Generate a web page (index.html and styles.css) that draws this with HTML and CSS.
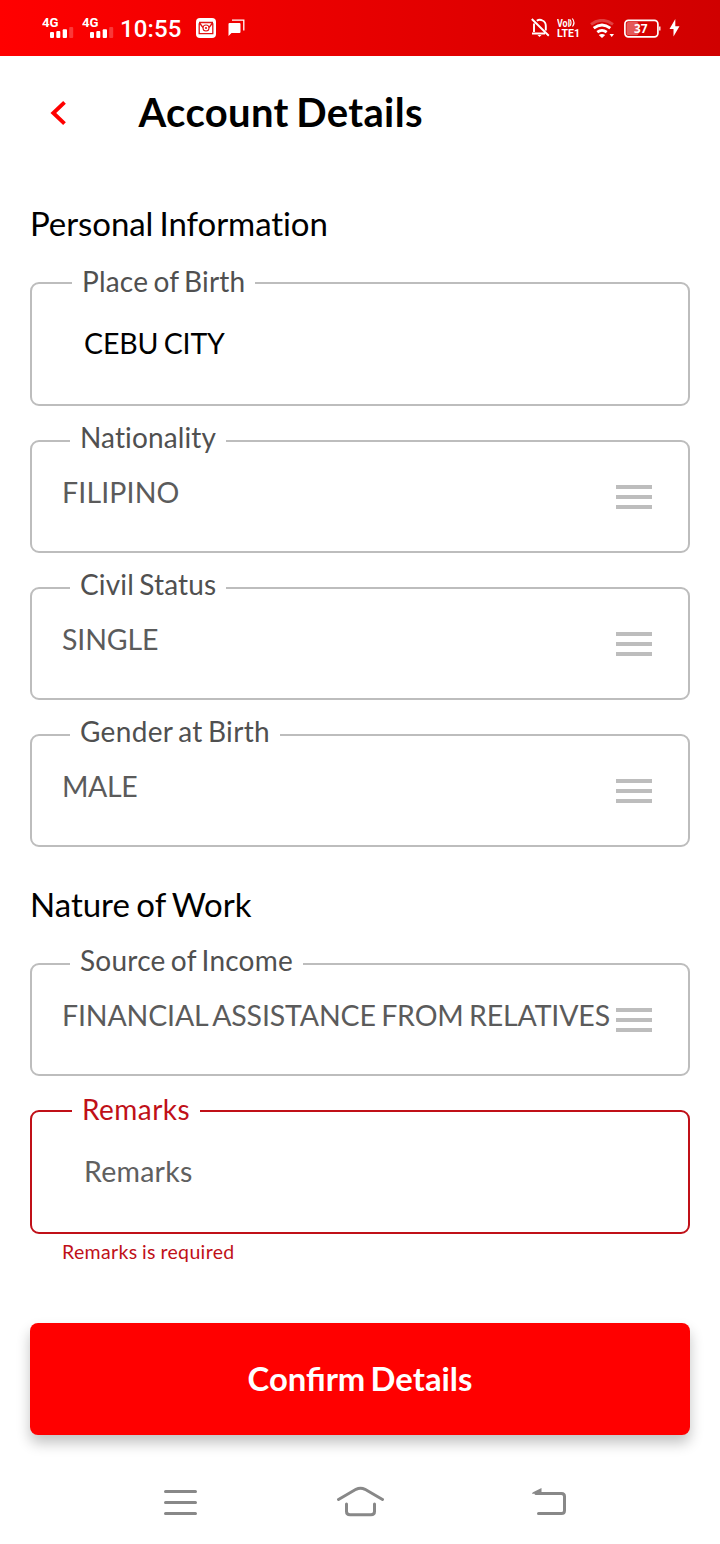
FILE: index.html
```html
<!DOCTYPE html>
<html lang="en">
<head>
<meta charset="utf-8">
<title>Account Details</title>
<link rel="stylesheet" href="styles.css">
</head>
<body>
<div class="status">
  <svg class="signal" width="32" height="24" viewBox="0 0 32 24"><text class="gen" x="0" y="11" textLength="16.5" lengthAdjust="spacingAndGlyphs">4G</text><g fill="#fff"><rect x="8" y="16" width="4" height="6" rx="1"/><rect x="14.3" y="15" width="4" height="7" rx="1"/><rect x="20.7" y="13.3" width="4.3" height="8.7" rx="1"/><rect x="27.2" y="11" width="4" height="11" rx="1" opacity=".22"/></g></svg>
  <svg class="signal" width="32" height="24" viewBox="0 0 32 24"><text class="gen" x="0" y="11" textLength="16.5" lengthAdjust="spacingAndGlyphs">4G</text><g fill="#fff"><rect x="8" y="16" width="4" height="6" rx="1"/><rect x="14.3" y="15" width="4" height="7" rx="1"/><rect x="20.7" y="13.3" width="4.3" height="8.7" rx="1"/><rect x="27.2" y="11" width="4" height="11" rx="1" opacity=".22"/></g></svg>
  <span class="time">10:55</span>
  <svg class="mail" width="20" height="20" viewBox="0 0 20 20"><rect width="20" height="20" rx="4" fill="#fff"/><path d="M3.2 5.2V15.6H16.8V5.2M3 4.5H17M3.5 5L7 9.5M16.500 5L13 9.500" fill="none" stroke="#e11414" stroke-width="1.3"/><circle cx="10" cy="10" r="3" fill="none" stroke="#e11414" stroke-width="1.1"/><circle cx="10" cy="10" r="1.1" fill="#e11414"/></svg>
  <svg class="chat" width="17" height="18" viewBox="0 0 17 18"><path d="M1.500 4H11.500Q12.500 4 12.500 5V13Q12.500 14 11.500 14H3.500L.5 17V5Q.5 4 1.500 4Z" fill="#fff"/><path d="M4 1.200H15.800V11.500" fill="none" stroke="#fff" stroke-width="1.300"/></svg>
  <span class="spacer"></span>
  <svg class="bell" width="19" height="20" viewBox="0 0 19 20"><g fill="none" stroke="#fff" stroke-width="1.900"><path d="M3 5.500V14M1 15.500H14M5.800 2.800Q8.500 .8 11.500 2.500Q14.800 4 14.800 8V12.500M.8 1L17.800 17.800"/></g><path d="M6.500 17H10.500L8.500 19Z" fill="#fff"/></svg>
  <svg class="lte" width="24" height="24" viewBox="0 0 24 24"><text class="volte" x="0" y="11" textLength="13" lengthAdjust="spacingAndGlyphs">Vol</text><path d="M13 3.500Q15 6.500 13 10M15.300 2.500Q18.500 6.500 15.500 10.500" fill="none" stroke="#fff" stroke-width="1.200"/><text class="volte" x="0" y="21" textLength="23" lengthAdjust="spacingAndGlyphs">LTE1</text></svg>
  <svg class="wifi" width="25" height="20" viewBox="0 0 25 20"><g fill="none" stroke="#fff" stroke-width="2.800"><path d="M1 5.300Q12 -2.700 23 5.300" opacity=".25"/><path d="M3.700 9.200Q12 2.700 20.300 9.200M7.300 13.200Q12 9.500 16.700 13.200"/></g><path d="M8.800 16Q12 14 15.200 16L12 19ZM19.500 15H24L21.750 18Z" fill="#fff"/></svg>
  <svg class="battery" width="37" height="20" viewBox="0 0 37 20"><rect x=".9" y="1.400" width="33" height="16.400" rx="3.500" fill="none" stroke="#fff" stroke-width="1.700"/><rect x="2.500" y="3" width="12" height="13.300" rx="2" fill="#fff" opacity=".35"/><path d="M35.800 7.500V11.500" stroke="#fff" stroke-width="1.300"/><text class="level" x="10" y="14" textLength="13.500" lengthAdjust="spacingAndGlyphs">37</text></svg>
  <svg class="bolt" width="11" height="18" viewBox="0 0 11 18"><path d="M6.300 0L.5 10H4.500V17.500L10.500 7.200H6.300Z" fill="#fff"/></svg>
</div>

<header class="header">
  <svg class="back" width="18" height="26" viewBox="0 0 18 26"><path d="M16.500 2.300L5.300 13L16.500 23.700" fill="none" stroke="#f00" stroke-width="3.900"/></svg>
  <h1 class="title">Account Details</h1>
</header>

<main class="form">
  <h2 class="section">Personal Information</h2>
  <div class="field text-field"><span class="label">Place of Birth</span><span class="value">CEBU CITY</span></div>
  <div class="field select nationality"><span class="label">Nationality</span><span class="value">FILIPINO</span><span class="menu"></span></div>
  <div class="field select"><span class="label">Civil Status</span><span class="value">SINGLE</span><span class="menu"></span></div>
  <div class="field select gender"><span class="label">Gender at Birth</span><span class="value">MALE</span><span class="menu"></span></div>
  <h2 class="section work">Nature of Work</h2>
  <div class="field select income"><span class="label">Source of Income</span><span class="value">FINANCIAL ASSISTANCE FROM RELATIVES</span><span class="menu"></span></div>
  <div class="field text-field error"><span class="label">Remarks</span><span class="value">Remarks</span></div>
  <p class="message">Remarks is required</p>
  <button class="confirm" type="button">Confirm Details</button>
</main>

<nav class="nav">
  <svg class="recent" width="33" height="28" viewBox="0 0 33 28"><path d="M1.500 3.500H31.500M1.500 14.500H31.500M1.500 25.500H31.500"/></svg>
  <svg class="home" width="48" height="32" viewBox="0 0 48 32"><path d="M2.500 13.500L20 3.300Q24.500 1 29 3.300L46.500 13.500M10.500 18V25.500Q10.500 28.700 14 28.700H35Q38.500 28.700 38.500 25.500V18"/></svg>
  <svg class="return" width="34" height="28" viewBox="0 0 34 28"><path d="M4 5.500H29.500Q32.500 5.500 32.500 8.500V22.500Q32.500 25.500 29.500 25.500H6.500"/><path class="tip" d="M0 5.700Q0 4.800 1 4.200L9.500 0V5.700Z"/></svg>
</nav>
</body>
</html>
```
FILE: styles.css
```css
* { box-sizing: border-box; }
body {
  margin: 0;
  width: 720px;
  height: 1544px;
  overflow: hidden;
  background: #fff;
  font-family: Lato, sans-serif;
  color: #000;
}
svg { display: block; flex: none; }
h1, h2, p { margin: 0; font-weight: 400; }

.status {
  display: flex;
  align-items: center;
  height: 56px;
  padding: 0 40px 0 42px;
  background: linear-gradient(90deg, #f00, #d00000);
  font-family: Roboto, sans-serif;
}
.signal { margin-right: 8px; }
.gen { font: 700 13px Roboto, sans-serif; fill: #fff; }
.time { width: 62px; margin-right: 14px; margin-left: -2px; padding-top: 1px; font-size: 24px; font-weight: 500; line-height: 56px; letter-spacing: .15px; color: #fff; white-space: nowrap; }
.chat { margin-left: 12px; margin-top: -1px; }
.spacer { flex: 1; }
.bell { margin-right: 7px; }
.lte { margin-right: 9px; }
.wifi { margin-right: 9px; margin-top: 1px; }
.battery { margin-right: 8px; margin-top: 2px; }
.volte { font: 700 10px Roboto, sans-serif; fill: #fff; }
.level { font: 700 12.5px "Open Sans", sans-serif; fill: #fff; }

.header { display: flex; align-items: center; height: 114px; padding-left: 48px; }
.title { margin: -2px 0 0 72.5px; font-size: 40px; font-weight: 700; line-height: 48px; letter-spacing: .36px; word-spacing: -2.7px; }

.form { display: flex; flex-direction: column; padding: 33px 30px 0; }
.section { height: 79px; font-size: 33px; line-height: 40px; letter-spacing: 0; word-spacing: -2px; font-variant-ligatures: none; }
.section:first-child { letter-spacing: -.08px; }
.section.work { height: 82px; padding-top: 3px; }
.field {
  position: relative;
  display: flex;
  justify-content: space-between;
  margin-bottom: 34px;
  border: 2px solid #bdbdbd;
  border-radius: 9px;
  color: #5b5b5b;
  font-size: 28.5px;
  line-height: 36px;
  white-space: nowrap;
}
.text-field { height: 124px; padding: 41px 52px 0; }
.select { height: 113px; padding: 32px 36px 0 30px; }
.label {
  position: absolute;
  left: 40px;
  top: -21px;
  padding: 0 10px;
  background: #fff;
  color: #505050;
  font-size: 28px;
  letter-spacing: .2px;
  word-spacing: -2.1px;
  font-variant-ligatures: none;
}
.select .label { left: 38px; top: -23px; letter-spacing: .16px; }
.value { letter-spacing: -.14px; word-spacing: -1.8px; }
.select.nationality .label { letter-spacing: .13px; }
.select.gender .label { letter-spacing: .33px; }
.select.income .label { letter-spacing: .24px; }
.nationality .value { letter-spacing: .15px; }
.gender .value { letter-spacing: -.4px; }
.text-field .value { color: #000; }
.menu { width: 36px; height: 24px; margin-top: 11px; flex: none; border: solid #bdbdbd; border-width: 4px 0; background: linear-gradient(#bdbdbd, #bdbdbd) center / 100% 4px no-repeat; }
.error { border-color: #c01018; margin-bottom: 0; }
.error .label { color: #c01018; letter-spacing: .45px; }
.error .value { color: #606060; letter-spacing: .25px; }
.message { height: 89px; padding: 6px 32px 0; font-size: 19.5px; line-height: 24px; color: #c01018; letter-spacing: .35px; word-spacing: -.8px; }
.confirm {
  height: 112px;
  padding: 0;
  border: 0;
  border-radius: 8px;
  background: #f00;
  color: #fff;
  font: 700 32.8px/40px Lato, sans-serif;
  word-spacing: -2.7px;
  box-shadow: 0 8px 14px rgba(0, 0, 0, .24);
}

.nav { display: flex; align-items: center; height: 64px; padding-left: 164px; margin-top: 35px; }
.home { margin-left: 139px; }
.return { margin-left: 148px; }
.nav path { fill: none; stroke: #888; stroke-width: 3; stroke-linecap: round; }
.nav .tip { fill: #888; stroke: none; }
```
